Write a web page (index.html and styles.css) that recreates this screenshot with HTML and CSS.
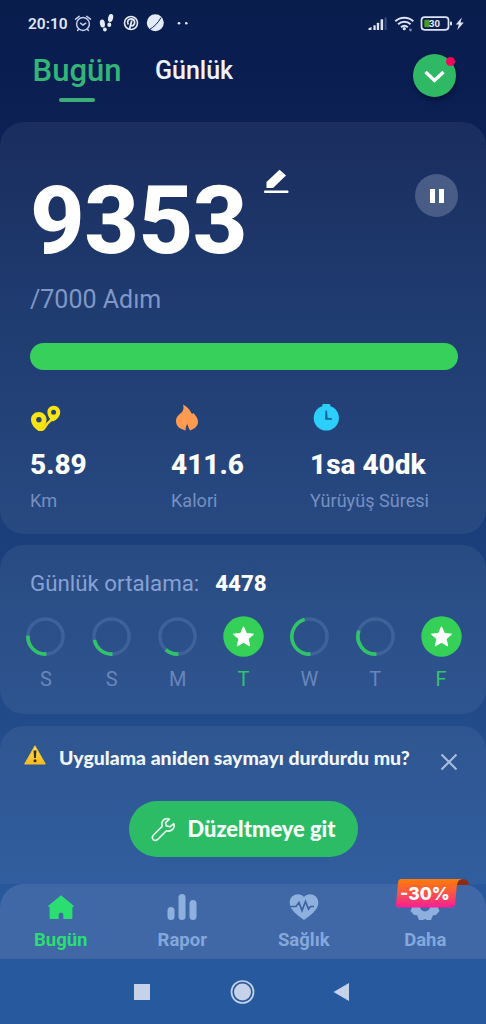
FILE: index.html
```html
<!DOCTYPE html>
<html lang="tr">
<head>
<meta charset="utf-8">
<title>Adım Sayar</title>
<link rel="stylesheet" href="styles.css">
</head>
<body>
<div class="phone">
  <div class="status">
    <span class="clock">20:10</span>
    <svg class="st-left" width="120" height="24" viewBox="74 11 120 24">
      <g fill="none" stroke="#c3cee8" stroke-width="1.5" stroke-linecap="round">
        <circle cx="83" cy="24" r="6.4"/><path d="M75.6 19.2l3.6-2.8M90.4 19.2l-3.6-2.8M80.5 23.2l2.5 1.8 2.8-1.8M78.6 29.3l-1 1.2M87.4 29.3l1 1.2"/>
      </g>
      <g fill="#e4ebf8">
        <ellipse cx="110.600" cy="18" rx="2.500" ry="4" transform="rotate(14 110.600 18)"/><ellipse cx="109.300" cy="24.800" rx="2" ry="2.300"/>
        <ellipse cx="102.400" cy="23.500" rx="2.500" ry="4" transform="rotate(-8 102.400 23.500)"/><ellipse cx="104.900" cy="29.600" rx="1.900" ry="2"/>
        <circle cx="155.300" cy="22.800" r="8.500"/>
        <circle cx="179" cy="23.200" r="1.300"/><circle cx="186.300" cy="23.200" r="1.300"/>
      </g>
      <circle cx="131" cy="23" r="6.500" fill="none" stroke="#e4ebf8" stroke-width="1.600"/>
      <path d="M129.500 29l2.300-8.500M128.300 24.500c-2-3 .3-5.800 3.300-5.500 3.500.3 3.800 4.500 1.800 6.200-1.200 1-2.500.4-2.700-.4" fill="none" stroke="#e4ebf8" stroke-width="1.800"/>
      <path d="M149.500 29.500c4-2 9-7 11.500-12" fill="none" stroke="#0a1d4e" stroke-width="1"/>
    </svg>
    <svg class="st-right" width="100" height="20" viewBox="366 13 100 20">
      <g fill="#dce4f6"><path d="M368.500 30v-1.800l3-1.200v3z"/><rect x="373.400" y="25.300" width="2.300" height="4.700" rx=".5"/><rect x="376.800" y="22.800" width="2.300" height="7.200" rx=".5"/><rect x="380.600" y="19.300" width="2.500" height="10.700" rx=".5"/></g>
      <rect x="384.600" y="17.300" width="2" height="12.700" fill="#3b4d7b"/>
      <g fill="none" stroke="#dce4f6" stroke-width="2"><path d="M395.300 21.300c5-4.800 13-4.800 18 0M398.100 24.300c3.600-3.400 8.900-3.400 12.500 0M401 27.200c2-1.800 4.800-1.800 6.800 0"/></g>
      <circle cx="404.300" cy="28.700" r="1.600" fill="#dce4f6"/><circle cx="410.500" cy="30" r="1.400" fill="#7385b2"/>
      <rect x="421.500" y="17.200" width="27" height="12.600" rx="3" fill="none" stroke="#dce4f6" stroke-width="1.700"/><rect x="450" y="21.500" width="2" height="4" rx="1" fill="#dce4f6"/>
      <rect x="424.300" y="19.700" width="5.400" height="7.600" rx="1" fill="#4a9c20"/>
      <text x="434.400" y="27.300" text-anchor="middle" class="batt">30</text>
      <path d="M461.800 17.500l-6 7h3l-1.500 5.500 6.500-7.500h-3.300z" fill="#dce4f6"/>
    </svg>
  </div>
  <div class="head">
    <div class="tab on"><span>Bugün</span><i></i></div>
    <div class="tab-b">Günlük</div>
    <div class="round"><svg width="43" height="43" viewBox="0 0 43 43"><path d="M12.500 18l9 8.500 9-8.500" fill="none" stroke="#fff" stroke-width="3.300"/></svg><b></b></div>
  </div>

  <section class="card main">
    <div class="top-row">
      <span class="steps">9353</span>
      <svg class="pen" width="25" height="26" viewBox="0 0 25 26"><path d="M2.500 19v-6L15.500.8l6.500 5.700L9 19z" fill="#fff"/><rect y="21.500" width="24.500" height="2.500" rx="1" fill="#fff"/></svg>
      <div class="pause"><i></i><i></i></div>
    </div>
    <div class="goal">/7000 Adım</div>
    <div class="bar"></div>
    <div class="stats">
      <div class="stat s1">
        <svg width="32" height="28" viewBox="0 0 32 28"><path d="M8.500 25.500c7 2 6-4.500 10.500-7.500 2-1.300 3-3 4-6" fill="none" stroke="#fbe30f" stroke-width="2.500"/><path fill="#fbe30f" fill-rule="evenodd" d="M8.800 8C4.500 8 1 11.300 1 15.500c0 5 4 9.500 8 11.500 4-2 7.500-6.500 7.500-11.500C16.500 11.300 13 8 8.800 8zm.1 5a2.700 2.700 0 1 1 0 5.400 2.700 2.700 0 0 1 0-5.400z"/><path fill="#fbe30f" fill-rule="evenodd" d="M23.800 1.700c-3.500 0-6.400 2.800-6.400 6.300 0 4 2.600 7.500 5.600 9.500 3.500-1.500 7.200-5 7.200-9.500 0-3.500-2.900-6.300-6.400-6.300zm-.2 4a2.500 2.500 0 1 1 0 5 2.500 2.500 0 0 1 0-5z"/></svg>
        <strong>5.89</strong><span>Km</span>
      </div>
      <div class="stat s2">
        <svg width="32" height="28" viewBox="0 0 32 28"><path fill="#ff9b50" d="M12 .5c6 3 7.500 7 9 9.500l1.500-1c2.500 3 4.500 5.500 4.500 9 0 4-3.500 7-8 8.500-1-2-2-4-2.700-6.500-1.200 2-1.700 4-1.700 6.500C9 25 5 22 5 17.500 5 12 8.500 10.500 11 8c1.500-2 2-4.500 1-7.500z"/></svg>
        <strong>411.6</strong><span>Kalori</span>
      </div>
      <div class="stat s3">
        <svg width="32" height="28" viewBox="0 0 32 28"><rect x="12.300" y="0" width="8" height="5" rx="1" fill="#2bcff9"/><circle cx="16.300" cy="14" r="12.600" fill="#2bcff9"/><path d="M15.500 6.500h1.500l.6 7.200 4.400.6v1.500h-6.900z" fill="#16649c"/></svg>
        <strong>1sa 40dk</strong><span class="dur">Yürüyüş Süresi</span>
      </div>
    </div>
  </section>

  <section class="card avg">
    <div class="avg-t"><span>Günlük ortalama:</span><strong>4478</strong></div>
    <div class="days">
      <div><svg viewBox="0 0 42 42"><circle class="ring" cx="21" cy="21" r="18"/><path class="arc" d="M22 39A18 18 0 0 1 3 20"/></svg>S</div>
      <div><svg viewBox="0 0 42 42"><circle class="ring" cx="21" cy="21" r="18"/><path class="arc" d="M22 39A18 18 0 0 1 3.500 24.500"/></svg>S</div>
      <div><svg viewBox="0 0 42 42"><circle class="ring" cx="21" cy="21" r="18"/><path class="arc" d="M22 39A18 18 0 0 1 9 34.400"/></svg>M</div>
      <div class="done"><svg viewBox="0 0 42 42"><circle cx="21" cy="21" r="20.700" fill="#34d058"/><path class="star" d="M21 11l3 6.800 7.300.8-5.500 4.900 1.600 7.200-6.400-3.700-6.400 3.700 1.600-7.200-5.500-4.900 7.300-.8z"/></svg>T</div>
      <div><svg viewBox="0 0 42 42"><circle class="ring" cx="21" cy="21" r="18"/><path class="arc" d="M22 39A18 18 0 0 1 16 3.700"/></svg>W</div>
      <div><svg viewBox="0 0 42 42"><circle class="ring" cx="21" cy="21" r="18"/><path class="arc" d="M22 39A18 18 0 0 1 4 15"/></svg>T</div>
      <div class="done"><svg viewBox="0 0 42 42"><circle cx="21" cy="21" r="20.700" fill="#34d058"/><path class="star" d="M21 11l3 6.800 7.300.8-5.500 4.900 1.600 7.200-6.400-3.700-6.400 3.700 1.600-7.200-5.500-4.900 7.300-.8z"/></svg>F</div>
    </div>
  </section>

  <section class="card fix">
    <div class="fix-t">
      <svg class="warn" width="22" height="20" viewBox="0 0 22 20"><defs><linearGradient id="wg" x2="0" y2="1"><stop offset="0" stop-color="#ffe36a"/><stop offset="1" stop-color="#f9b917"/></linearGradient></defs><path d="M11 .8L21.300 19H.7z" fill="url(#wg)" stroke="#f5c02c" stroke-linejoin="round"/><path d="M9.500 5.500h3l-.6 7.500h-1.800z" fill="#3a2c18"/><circle cx="11" cy="15.700" r="1.500" fill="#3a2c18"/></svg>
      <strong>Uygulama aniden saymayı durdurdu mu?</strong>
      <svg class="x" width="18" height="18" viewBox="0 0 18 18"><path d="M1.500 1.500l15 15M16.500 1.500l-15 15" stroke="#a9bddd" stroke-width="2.100"/></svg>
    </div>
    <div class="btn">
      <svg width="25" height="25" viewBox="0 0 25 25"><path d="M18.500 2.200c-5-2-9 2.300-7.200 7L2.500 18c-3 3 1 7.500 4.200 4.400l8.700-8.600c5 1.500 9-2.800 7.300-7.300L19 9.800l-3.700-.9-.8-3.300z" fill="none" stroke="#e9fff0" stroke-width="1.600" stroke-linejoin="round"/></svg>
      <span>Düzeltmeye git</span>
    </div>
  </section>

  <nav class="nav">
    <div class="on"><svg width="32" height="28" viewBox="0 0 32 28"><path fill="#2ade72" d="M16 1.200L29 12l-1.600 1.600V24q0 1-1 1H18.300v-5q-2.300-3-4.600 0v5H5.600q-1 0-1-1V13.600L3 12z"/></svg><span>Bugün</span></div>
    <div><svg width="32" height="28" viewBox="0 0 32 28"><g fill="#8eb0df"><rect x="1.500" y="13" width="7" height="13" rx="3.500"/><rect x="12.500" y="0" width="7" height="26" rx="3.500"/><rect x="23.500" y="6" width="7" height="20" rx="3.500"/></g></svg><span>Rapor</span></div>
    <div><svg width="32" height="28" viewBox="0 0 32 28"><path fill="#8eb0df" d="M16 26C10 21.500 1.700 16 1.700 8.700 1.700 0 12-2 16 3 20-2 30.300 0 30.300 8.700 30.300 16 22 21.500 16 26z"/><path d="M2 12.500h6l3-4 3 8 3.500-9 3 7.500 2-2.500h3.500" fill="none" stroke="#3c63a0" stroke-width="1.700"/></svg><span>Sağlık</span></div>
    <div><svg width="32" height="28" viewBox="0 0 32 28"><path fill="#8eb0df" fill-rule="evenodd" d="M11 0h10l2 4 6-.5 2 6-2 4 1.500 3.500L27 21l-3 .2L22 26h-4l-2-1-2 1h-4l-2-4.800-3-.2L1.500 17 3 13.500l-2-4 2-6L9 4zM16 7.500a5 5 0 1 0 0 10 5 5 0 0 0 0-10z"/></svg><span>Daha</span></div>
    <div class="sale"><svg width="74" height="30" viewBox="0 0 74 30"><defs><linearGradient id="sg" x2="0" y2="1"><stop offset="0" stop-color="#ff7c08"/><stop offset=".45" stop-color="#fb5940"/><stop offset="1" stop-color="#f91d98"/></linearGradient></defs><path d="M61 6c0-4 2-6 5-6 4 0 7 2 7 6z" fill="#8c2c16"/><path d="M5 0h62c-5 0-6 4-6.500 10L59 25q-.5 4-4 3.500L3 28.500q-3 0-3-3L2 4q.4-4 3-4z" fill="url(#sg)"/></svg><em>-30%</em></div>
  </nav>
  <div class="sys">
    <svg width="486" height="65" viewBox="0 0 486 65"><rect x="134" y="25" width="16" height="16" fill="#c6d1ea"/><circle cx="242.500" cy="33" r="8.500" fill="#c6d1ea"/><circle cx="242.500" cy="33" r="11" fill="none" stroke="#c6d1ea" stroke-width="1.700"/><path d="M349 24v18l-15.500-9z" fill="#c6d1ea"/></svg>
  </div>
</div>
</body>
</html>
```

FILE: styles.css
```css
* { box-sizing: border-box; }
body { margin: 0; font-family: Roboto, "Liberation Sans", sans-serif; }
svg { display: block; flex: none; }
span, strong { white-space: nowrap; }
.phone {
  width: 486px; height: 1024px; overflow: hidden;
  display: flex; flex-direction: column;
  background: linear-gradient(#091d4d 0, #0a1d50 60px, #0c2054 120px, #112f66 300px, #1b3f7b 540px, #224b89 720px, #28579a 880px, #26599e 960px);
}
.status { height: 46px; flex: none; display: flex; align-items: flex-start; padding: 11px 20px 0 28px; }
.clock { width: 46px; font-size: 15.500px; line-height: 26px; font-weight: 600; color: #dfe6f6; }
.st-right { margin: 2px 0 0 auto; }
.batt { font: 700 9.500px Roboto, sans-serif; fill: #e8eefb; }
.head { height: 76px; flex: none; display: flex; padding: 0 30px 0 33px; }
.tab { width: 88px; display: flex; flex-direction: column; align-items: center; color: #33b578; font-size: 31px; font-weight: 500; line-height: 50px; }
.tab i { width: 36px; height: 4px; border-radius: 2px; background: #3eae79; margin-top: 2px; }
.tab-b { margin-left: 34px; color: #eef3ff; font-size: 25px; line-height: 49px; font-weight: 500; }
.round { position: relative; margin: 8px 0 0 auto; width: 43px; height: 43px; border-radius: 50%; background: #2fb965; box-shadow: 1px 3px 5px rgba(0, 8, 35, .55); }
.round b { position: absolute; right: 1px; top: 3px; width: 9px; height: 9px; border-radius: 50%; background: #f2075d; }

.card { flex: none; border-radius: 24px; background: rgba(255, 255, 255, .06); }
.main { height: 412px; display: flex; flex-direction: column; padding: 45px 28px 0 30px; }
.top-row { height: 116px; display: flex; }
.steps { width: 234px; font-size: 95px; line-height: 107px; font-weight: 800; letter-spacing: -.5px; color: #fff; }
.pen { margin-top: 2px; }
.pause { margin: 7px 0 0 auto; width: 43px; height: 43px; border-radius: 50%; background: #485c86; display: flex; gap: 4px; align-items: center; justify-content: center; }
.pause i { width: 5px; height: 14px; background: #fff; }
.goal { height: 60px; font-size: 25px; line-height: 33px; font-weight: 400; color: #7f98c9; }
.bar { height: 27px; border-radius: 14px; background: #36d05b; }
.stats { display: flex; padding-top: 34px; }
.stat { display: flex; flex-direction: column; }
.s1 { width: 141px; }
.s2 { width: 139px; }
.stat strong { margin-top: 14px; font-size: 28px; line-height: 37px; font-weight: 800; color: #fff; }
.stat span { margin-top: 7px; font-size: 18.100px; line-height: 22px; color: #7690c2; }

.avg { height: 169px; margin-top: 11px; padding: 22px 12px 0 13px; }
.avg-t { display: flex; padding-left: 17px; height: 49px; line-height: 33px; font-size: 22.300px; color: #88a2d3; }
.avg-t strong { margin-left: 16px; color: #fff; font-weight: 800; }
.days { display: flex; }
.days div { flex: 1; display: flex; flex-direction: column; align-items: center; gap: 10px; font-size: 20px; line-height: 24px; color: #6986bb; }
.days svg { width: 41px; height: 41px; }
.days .done { color: #2fc667; }
.ring { fill: none; stroke: #40629b; stroke-width: 3.500; }
.arc { fill: none; stroke: #30c467; stroke-width: 3.700; }
.star { fill: #fff; stroke: #fff; stroke-linejoin: round; }

.fix { height: 158px; margin-top: 12px; border-radius: 24px 24px 0 0; display: flex; flex-direction: column; align-items: center; background: linear-gradient(rgba(255, 255, 255, .06), rgba(255, 255, 255, .04)); }
.fix-t { width: 100%; height: 75px; display: flex; align-items: flex-start; padding: 16px 28px 0 24px; font: 700 19.450px/32px Lato, sans-serif; color: #f1f6ff; }
.warn { margin: 3px 13px 0 0; }
.x { margin: 11px 0 0 auto; }
.btn { width: 229px; height: 56px; border-radius: 28px; background: #2dbc66; display: flex; align-items: center; padding-left: 22px; gap: 12px; font: 900 21.900px/50px Lato, sans-serif; color: #f8fffb; }

.nav { position: relative; flex: none; height: 75px; border-radius: 24px 24px 0 0; background: #4067a6; display: flex; }
.nav > div:not(.sale) { width: 121.500px; display: flex; flex-direction: column; align-items: center; padding-top: 10px; color: #84a8db; font-size: 18.500px; font-weight: 700; line-height: 26px; }
.nav span { margin-top: 5px; }
.nav > .on { color: #2ade72 !important; }
.sale { position: absolute; left: 396px; top: -5px; }
.sale em { position: absolute; left: 4px; top: 3px; font: 800 17.500px/24px Inter, sans-serif; color: #fff; white-space: nowrap; }
.sys { height: 65px; flex: none; background: #26599e; }
```
